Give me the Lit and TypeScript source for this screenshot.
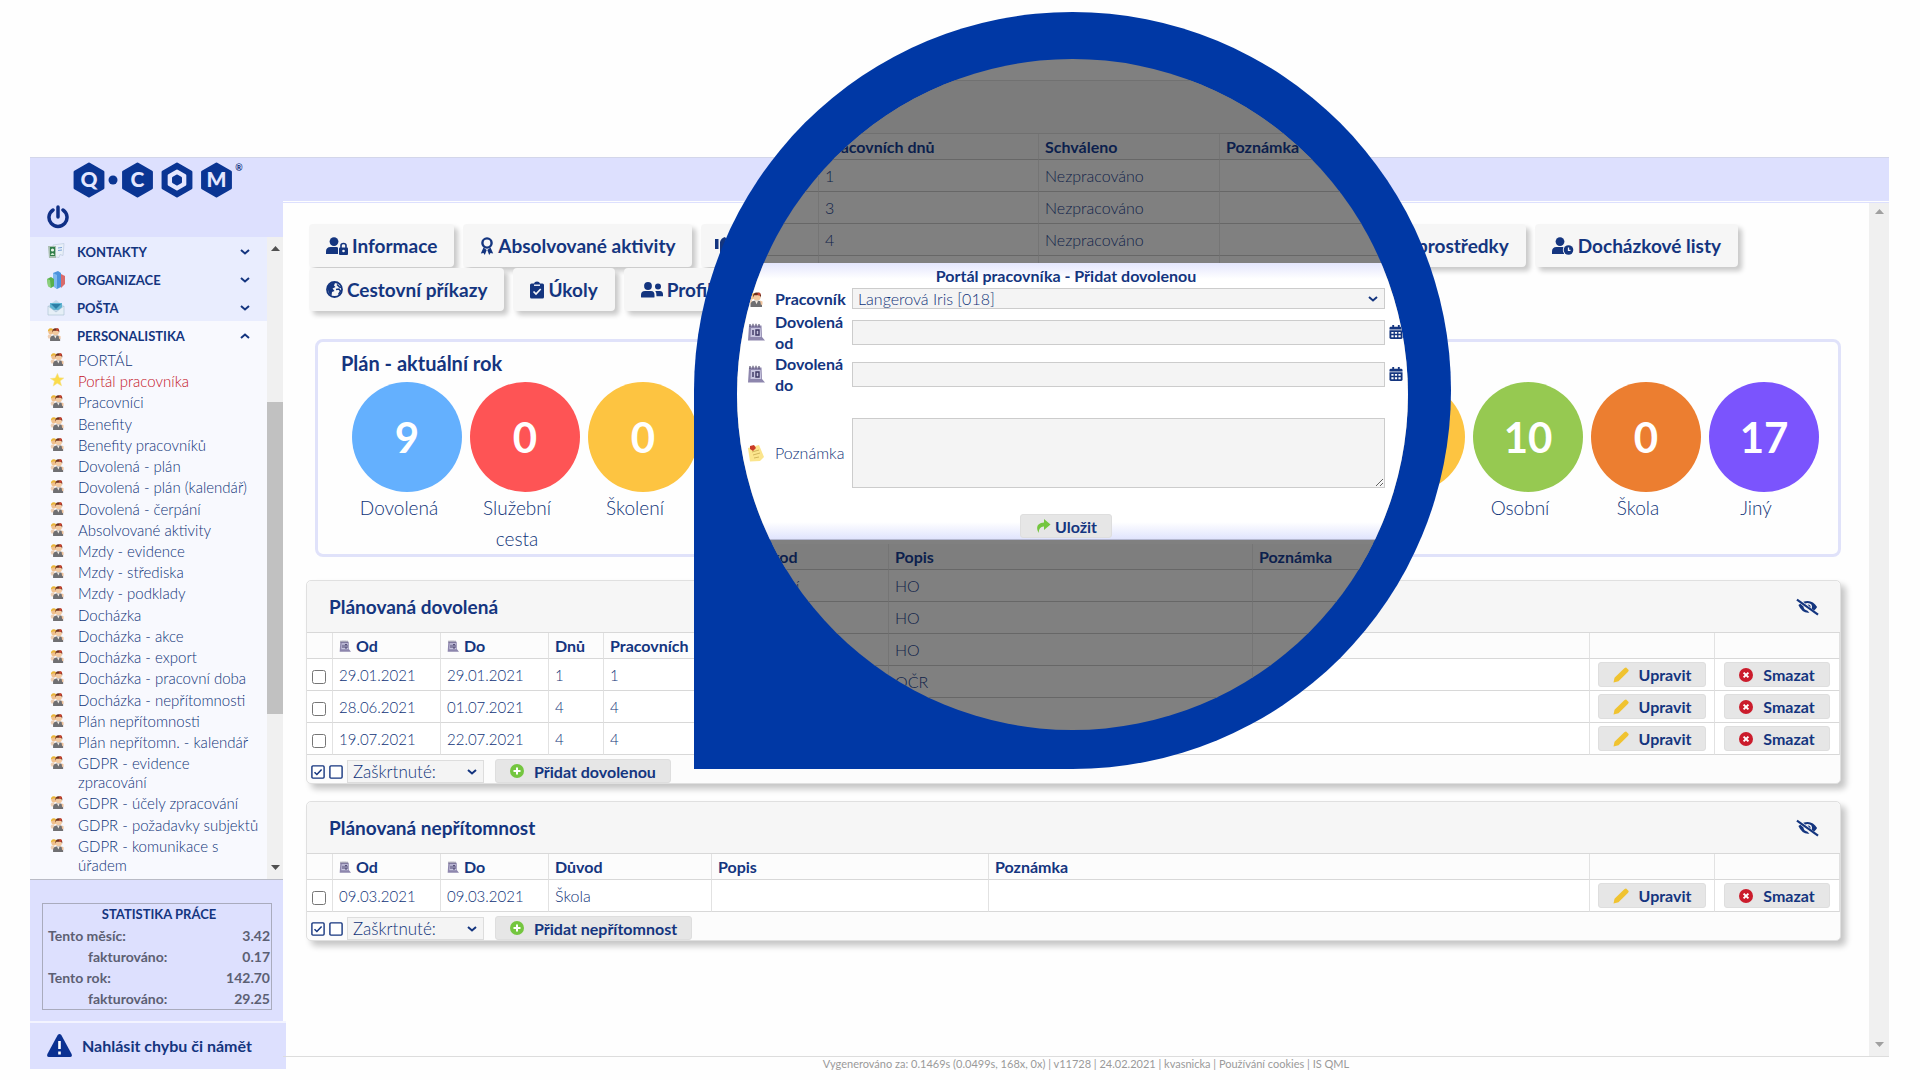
import { LitElement, html, svg, css } from "lit";
import { customElement } from "lit/decorators.js";
import { styleMap } from "lit/directives/style-map.js";

/* ---------- icons ---------- */
const person = html`<svg class="ico-person" viewBox="0 0 16 16" aria-hidden="true">
  <circle cx="4.5" cy="5.5" r="3" fill="#f0c08c"/><path d="M1 5.5Q1 1 4.6 1.4 7.5 1.6 7 4.5L5 3.6 2.4 4.4z" fill="#e9b53a"/>
  <path d="M0.8 11q0-3 3.6-2.8l2 4.800H1.600z" fill="#eecfb4"/>
  <circle cx="10" cy="6" r="3.600" fill="#f2c9a0"/><path d="M6.200 6.500Q5.500 1.500 9.800 1.400q5-.2 4.200 5-1-2.600-2.700-2.400-2.600.6-4.100.2z" fill="#6d2f1c"/>
  <circle cx="12" cy="3" r="1.500" fill="#c8442f"/>
  <path d="M3.500 16q-.6-6 3.700-6.200h4.800q3.600.4 3 6.200z" fill="#6f6f72"/><path d="M8 9.800h3l-1.400 3.400z" fill="#f4ece4"/>
  <path d="M13 9.500l2.500 1v3l-1.500.4z" fill="#f0c39c"/></svg>`;
const star = html`<svg class="ico-person" viewBox="0 0 16 16" aria-hidden="true"><path d="M8.500.5l2 5 5.300.200-4.200 3.400 1.600 5.600-4.900-3-4.600 3.200 1.400-5.700L.5 6.300l5.500-.5z" fill="#fbdc4b" stroke="#f3e08a" stroke-width=".6"/></svg>`;
const contact = html`<svg class="ico-group" viewBox="0 0 18 18" aria-hidden="true"><path d="M6 2l11-1.500-1 12-3-1-1 3-6-1z" fill="#e9f0f8" stroke="#b9c8dc" stroke-width=".6"/><path d="M1 3h8v12H2z" fill="#a9bfb0"/><path d="M3 4h5v9H3z" fill="#2f7d4a"/><circle cx="5.500" cy="7" r="1.600" fill="#e8f4e6"/><path d="M3.500 12q2-4 4 0z" fill="#d3ecd2"/><path d="M11 5l4-.5M11 7.500l4-.5" stroke="#7da4d8"/></svg>`;
const org = html`<svg class="ico-group" viewBox="0 0 18 18" aria-hidden="true"><path d="M6 2l5-2 3 2v14l-4 2-4-3z" fill="#4b93dd"/><path d="M6 2l4 2v14l-4-3z" fill="#7fb9f0"/><path d="M14 3l4 2v8l-4 4z" fill="#d96a6a"/><path d="M0 8l4-2 3 2v7l-3 2-3-2z" fill="#58b04c"/><path d="M0 8l3 1 1 8-3-2z" fill="#8cd07c"/></svg>`;
const mail = html`<svg class="ico-group" viewBox="0 0 18 18" aria-hidden="true"><path d="M1 7l8-6 8 6v9H1z" fill="#c6d9ea"/><path d="M3 4h12v7H3z" fill="#5fb4d2"/><path d="M4 5h10l-5 5z" fill="#2c7ea6"/><path d="M1 7l8 6 8-6v9H1z" fill="#e6eff7" stroke="#a9bfd2" stroke-width=".6"/></svg>`;
const cal = html`<svg class="ico-cal" viewBox="0 0 18 18" aria-hidden="true"><path d="M2 2.500h12.500l.5 11.500 3 3.500H1z" fill="#8d86ad"/><path d="M4 5h9.500l.8 9H3.500z" fill="#c8c5df"/><path d="M3 1v3M6 .8v3M9 .8v3M12 1v3" stroke="#5c5675" stroke-width="1.200"/><path d="M6 7v5M9 7h3v5H9z" stroke="#3c3663" stroke-width="1.400" fill="none"/></svg>`;
const note = html`<svg class="ico-cal" viewBox="0 0 18 18" aria-hidden="true"><path d="M1 4l11-3 5 12-4 4-10 .5z" fill="#fbe58d"/><path d="M5 8l7-2M6 11l7-2M7 14l5-1" stroke="#d2b65c"/><path d="M3 2l4-1 2 3-3 3-3-2z" fill="#c93a26"/></svg>`;
const chevron = html`<svg class="chev" viewBox="0 0 10 6" aria-hidden="true"><path d="M1 1l4 3.500L9 1" fill="none" stroke="currentColor" stroke-width="2"/></svg>`;
const plus = html`<svg class="ico14" viewBox="0 0 14 14" aria-hidden="true"><circle cx="7" cy="7" r="7" fill="#74c63f"/><path d="M7 3.500v7M3.500 7h7" stroke="#fff" stroke-width="2"/></svg>`;
const cross = html`<svg class="ico14" viewBox="0 0 14 14" aria-hidden="true"><circle cx="7" cy="7" r="7" fill="#cb1c2c"/><path d="M4.600 4.600l4.800 4.800M9.400 4.600L4.600 9.400" stroke="#fff" stroke-width="2"/></svg>`;
const pencil = html`<svg class="ico16" viewBox="0 0 16 16" aria-hidden="true"><path d="M.5 15.500l1-4.800L10.500 2q1.200-1.600 2.600-1.500l2.300 2.200q.8 1-.8 2.600L5.500 14.300z" fill="#f0c330"/></svg>`;
const saveArrow = html`<svg class="ico16" viewBox="0 0 16 16" aria-hidden="true"><path d="M9 1l6.500 5.500L9 12V8.500Q4 8.200 3.500 15-1 5.500 9 4.500z" fill="#74c63f"/></svg>`;
const eyeOff = html`<svg class="ico-eye" viewBox="0 0 24 18" aria-hidden="true"><path d="M2.500 7Q6.500 16 14 15l-2-2.200Q8 12 7.800 8.500L4.500 5.500z" fill="currentColor"/><path d="M7.500 3.500Q17 .5 22 9q-1 2-3 3.600l-2.500-1.900Q17.800 5 12 4.800q-1.200 0-2.300.5z" fill="currentColor"/><path d="M12 6.500q3.500-.3 3.200 3.200z" fill="currentColor"/><path d="M1 1.200L23 17" stroke="currentColor" stroke-width="2.200"/></svg>`;
const calSolid = html`<svg class="ico14" viewBox="0 0 14 15" aria-hidden="true"><path d="M0 3.500Q0 2 1.500 2H3V0h2v2h4V0h2v2h1.500Q14 2 14 3.500V4.800H0z" fill="currentColor"/><path d="M0 5.700h14V13.500Q14 15 12.500 15h-11Q0 15 0 13.500z" fill="currentColor"/><path d="M2 7.500h2.400v2H2zM5.800 7.500h2.400v2H5.800zM9.600 7.500H12v2H9.600zM2 11h2.400v2H2zM5.800 11h2.400v2H5.800zM9.600 11H12v2H9.600z" fill="#fff"/></svg>`;
const checkAll = html`<svg class="ico14" viewBox="0 0 14 14" aria-hidden="true"><rect x=".9" y=".9" width="12.200" height="12.200" rx="1" fill="#fff" stroke="currentColor" stroke-width="1.400"/><path d="M3.500 7.200l2.400 2.300 4.700-5" fill="none" stroke="currentColor" stroke-width="1.500"/></svg>`;
const checkNone = html`<svg class="ico14" viewBox="0 0 14 14" aria-hidden="true"><rect x=".9" y=".9" width="12.200" height="12.200" rx="1" fill="#fff" stroke="currentColor" stroke-width="1.400"/></svg>`;

const userBase = svg`<circle cx="8" cy="4.600" r="4.400"/><path d="M0 17v-2.500Q0 10 4.500 10h6Q12 10 12 11v6z"/>`;
const tabIcon: Record<string, unknown> = {
  lock: html`<svg class="ico-tab" viewBox="0 0 22 18" aria-hidden="true"><g fill="currentColor">${userBase}<rect x="13" y="10.500" width="9" height="7.500" rx="1"/></g><path d="M15 11V8.500Q15 6.500 17.500 6.500T20 8.500V11" fill="none" stroke="currentColor" stroke-width="1.600"/><circle cx="17.500" cy="14" r="1.300" fill="#f6f6f6"/></svg>`,
  clock: html`<svg class="ico-tab" viewBox="0 0 22 18" aria-hidden="true"><g fill="currentColor">${userBase}</g><circle cx="16.500" cy="13" r="5.700" fill="#f6f6f6"/><circle cx="16.500" cy="13" r="4.800" fill="currentColor"/><path d="M16.500 10.500V13.300H18.500" fill="none" stroke="#f6f6f6" stroke-width="1.300"/></svg>`,
  award: html`<svg class="ico-award" viewBox="0 0 14 18" aria-hidden="true"><circle cx="7" cy="6" r="4.600" fill="none" stroke="currentColor" stroke-width="2.400"/><path d="M3.500 10.500L.8 16.500l2.700-.4 1.300 1.900 1.900-5M10.500 10.500l2.700 6-2.700-.4L9.200 18l-1.900-5" fill="currentColor"/></svg>`,
  thumb: html`<svg class="ico-tab" viewBox="0 0 22 18" aria-hidden="true"><g fill="currentColor"><rect x="0" y="2" width="3.500" height="10"/><path d="M5 5Q6 1 10 0l1.500 2L10 5h8v9L9 17H5z"/></g></svg>`,
  globe: html`<svg class="ico-globe" viewBox="0 0 17 17" aria-hidden="true"><circle cx="8.500" cy="8.500" r="7.500" fill="none" stroke="currentColor" stroke-width="1.800"/><path d="M2 5Q5 1 9 2L8 4.500 9.500 6 6.500 7.500 8.500 10 6 11l-.5 4Q1 12 2 5z" fill="currentColor"/><path d="M11 3.500l2.500 2.500 2 .5M10 8.500l3-.5 1.500 2-2 3.500" fill="none" stroke="currentColor" stroke-width="1.500"/></svg>`,
  task: html`<svg class="ico-award" viewBox="0 0 14 17" aria-hidden="true"><path d="M1.500 2H4q.5-2 3-2t3 2h2.500Q14 2 14 3.500v12Q14 17 12.500 17h-11Q0 17 0 15.500v-12Q0 2 1.500 2z" fill="currentColor"/><path d="M4 3h6v1.500H4z" fill="#dfe4f4"/><path d="M3.500 10l2.500 2.500 4.700-5" fill="none" stroke="#f6f6f6" stroke-width="1.700"/></svg>`,
  users: html`<svg class="ico-tab" viewBox="0 0 22 16" aria-hidden="true"><g fill="currentColor"><circle cx="7" cy="4" r="3.900"/><path d="M0 15v-2q0-4 4-4h6q3.500 0 3.500 4v2q0 .5-1 .5H1q-1 0-1-.5z"/><circle cx="17" cy="4.500" r="3"/><path d="M14.300 9H19q3 .3 3 3.500v1.800h-6.500Q15.800 11 14.300 9z"/></g></svg>`,
};

const hex = (cx: number, cy: number, r: number, fill: string) => {
  const w = r * 0.87;
  const pts = [[0, -r], [w, -r / 2], [w, r / 2], [0, r], [-w, r / 2], [-w, -r / 2]]
    .map(([x, y]) => `${cx + x},${cy + y}`).join(" ");
  return svg`<polygon points=${pts} fill=${fill} stroke=${fill} stroke-width="3" stroke-linejoin="round"/>`;
};

const BLUE = "#0a3593";
const logo = html`<svg class="logo" viewBox="0 0 172 36" role="img" aria-label="Q·COM">
  ${[16, 64.500, 104, 143.500].map((x) => hex(x, 18, 16, BLUE))}
  <circle cx="40" cy="18" r="4.500" fill=${BLUE}/>
  ${hex(104, 18, 9, "#e4e7ff")}${hex(104, 18, 4, BLUE)}
  <g class="logo-letters"><text x="16" y="25">Q</text><text x="64.500" y="25">C</text><text x="143.500" y="25">M</text></g>
  <text class="logo-reg" x="166" y="9">®</text></svg>`;

/* ---------- data ---------- */
const groups = [
  { name: "KONTAKTY", icon: contact },
  { name: "ORGANIZACE", icon: org },
  { name: "POŠTA", icon: mail },
];
const menu = [
  "PORTÁL", "Portál pracovníka", "Pracovníci", "Benefity", "Benefity pracovníků", "Dovolená - plán",
  "Dovolená - plán (kalendář)", "Dovolená - čerpání", "Absolvované aktivity", "Mzdy - evidence",
  "Mzdy - střediska", "Mzdy - podklady", "Docházka", "Docházka - akce", "Docházka - export",
  "Docházka - pracovní doba", "Docházka - nepřítomnosti", "Plán nepřítomnosti", "Plán nepřítomn. - kalendář",
  "GDPR - evidence zpracování", "GDPR - účely zpracování", "GDPR - požadavky subjektů", "GDPR - komunikace s úřadem",
];
const stats = [
  ["Tento měsíc:", "3.42", false], ["fakturováno:", "0.17", true],
  ["Tento rok:", "142.70", false], ["fakturováno:", "29.25", true],
] as const;
const planLeft = [
  { n: 9, label: "Dovolená", color: "#64b0fe" },
  { n: 0, label: "Služební cesta", color: "#fe5455" },
  { n: 0, label: "Školení", color: "#fdc441" },
];
const planRight = [
  { n: "", label: "", color: "#fdc441" },
  { n: 10, label: "Osobní", color: "#96c951" },
  { n: 0, label: "Škola", color: "#ec7e30" },
  { n: 17, label: "Jiný", color: "#7b54fd" },
];

/* Element styles shared by the page and the magnified view. */
const shared = css`
  *, *::before, *::after { box-sizing: border-box; }
  :host { font-family: "Century Gothic", Lato, "Liberation Sans", sans-serif; font-weight: 300; color: #0f3378; font-size: 16px; }
  button, select, input, textarea { font: inherit; color: inherit; margin: 0; }
  svg { display: block; flex: none; }
  .ico14 { width: 14px; height: 14px; }
  .ico16 { width: 16px; height: 16px; }
  .ico-person { width: 14px; height: 14px; }
  .ico-group, .ico-cal { width: 18px; height: 18px; }
  .chev { width: 10px; height: 6px; color: #14357f; }
  .btn { display: inline-flex; align-items: center; justify-content: center; gap: 10px; height: 25px; padding: 0 14px;
    border: 1px solid #dedede; border-radius: 3px; background: #e6e6e6; color: #14357f; font-weight: 700; white-space: nowrap; }
  .pick { display: grid; align-items: center; }
  .pick > * { grid-area: 1 / 1; }
  .pick select { appearance: none; width: 100%; height: 100%; border: 1px solid #ccc; border-radius: 0; background: #f4f4f4; padding: 0 5px; }
  .pick .chev { justify-self: end; margin-right: 7px; pointer-events: none; }
  table { border-collapse: separate; border-spacing: 0; table-layout: fixed; width: 100%; }
  th, td { height: 32px; padding: 0 6px; text-align: left; white-space: nowrap; border-right: 1px solid #e2e2e2; border-bottom: 1px solid #d8d8d8; }
  th { height: 26px; font-weight: 700; color: #14357f; }
`;

@customElement("magnified-form")
export class MagnifiedForm extends LitElement {
  static styles = [shared, css`
    :host { display: block; width: 757px; height: 757px; padding: 47px 43px; background: #0038a5; border-radius: 50% 50% 50% 0; }
    .screen { display: flex; flex-direction: column; width: 671px; height: 671px; border-radius: 50%; overflow: hidden; background: #808080; }
    .top { height: 204px; overflow: hidden; }
    .strip { height: 22px; border-bottom: 1px solid #717171; }
    .band { height: 53px; background: #7c7c7c; border-bottom: 1px solid #707070; }
    th, td { border-right-color: #757575; border-bottom-color: #676767; color: #10234a; }
    th { background: #7e7e7e; color: #0c1f4d; }
    .c1 { width: 82px; } .c2 { width: 220px; } .c3 { width: 181px; }
    .d1 { width: 152px; } .d2 { width: 364px; }
    .low { padding-top: 4px; }
    .low th:first-child, .low td:first-child { padding-left: 13px; }
    form { display: flex; flex-direction: column; height: 277px; flex: none; border-bottom: 1px solid #b5b8d0;
      background: linear-gradient(#e4e6fd, #fff 16px, #fff 259px, #e0e4fd); }
    h2 { margin: 3px 0 0; padding-right: 13px; font-size: 16px; line-height: 20px; text-align: center; color: #14357f; }
    .field { display: grid; grid-template-columns: 28px 77px 533px 1fr; align-items: center; padding-left: 10px; height: 42px; }
    .field label { line-height: 21px; font-weight: 700; color: #14357f; }
    .field input { height: 25px; border: 1px solid #ccc; background: #f4f4f4; }
    .field .calendar { border: 0; padding: 0; background: none; color: #14357f; margin-left: 4px; justify-self: start; }
    .pick-row { height: 25px; }
    .pick { height: 21px; }
    .ico-person { width: 16px; height: 16px; }
    .req { color: #c23; font-size: 14px; line-height: 14px; align-self: start; padding-left: 5px; }
    .text-row { height: 115px; }
    .field.text-row label { font-weight: 300; color: #0f3378; }
    textarea { height: 70px; border: 1px solid #ccc; background: #f4f4f4; resize: vertical; }
    .save { align-self: center; margin: 4px 13px 0 0; height: 24px; gap: 4px; }
  `];

  render() {
    return html`<div class="screen">
      <div class="top"><div class="strip"></div><div class="band"></div>
        <table><colgroup><col class="c1"><col class="c2"><col class="c3"><col></colgroup>
          <tr><th></th><th>Pracovních dnů</th><th>Schváleno</th><th>Poznámka</th></tr>
          ${["1", "3", "4"].map((n) => html`<tr><td></td><td>${n}</td><td>Nezpracováno</td><td></td></tr>`)}
          <tr><td></td><td></td><td></td><td></td></tr>
        </table></div>
      <form @submit=${(e: Event) => e.preventDefault()}>
        <h2>Portál pracovníka - Přidat dovolenou</h2>
        <div class="field pick-row">${person}<label for="who">Pracovník</label>
          <span class="pick"><select id="who"><option>Langerová Iris [018]</option></select>${chevron}</span><span class="req">*</span></div>
        <div class="field">${cal}<label for="from">Dovolená od</label><input id="from">
          <button type="button" class="calendar" aria-label="Kalendář">${calSolid}</button></div>
        <div class="field">${cal}<label for="to">Dovolená do</label><input id="to">
          <button type="button" class="calendar" aria-label="Kalendář">${calSolid}</button></div>
        <div class="field text-row">${note}<label for="memo">Poznámka</label><textarea id="memo"></textarea></div>
        <button class="btn save">${saveArrow}Uložit</button>
      </form>
      <div class="low"><table><colgroup><col class="d1"><col class="d2"><col></colgroup>
        <tr><th>Důvod</th><th>Popis</th><th>Poznámka</th></tr>
        ${[["Osobní", "HO"], ["", "HO"], ["", "HO"], ["", "OČR"]].map(([a, b]) => html`<tr><td>${a}</td><td>${b}</td><td></td></tr>`)}
      </table></div>
    </div>`;
  }
}

@customElement("side-bar")
export class SideBar extends LitElement {
  static styles = [shared, css`
    :host { display: flex; flex-direction: column; background: #dde0fe; font-size: 14px; }
    .head { height: 80px; padding: 4px 0 0 43px; border-top: 1px solid #d3d6ea; }
    .logo { width: 172px; height: 36px; }
    .logo-letters { fill: #e4e7ff; font: 900 21px Lato, sans-serif; text-anchor: middle; }
    .logo-reg { fill: #14357f; font: 700 9px Lato, sans-serif; text-anchor: middle; }
    .power { border: 0; background: none; padding: 0; margin: 7px 0 0 -26px; color: #0f2f86; display: block; }
    .power svg { width: 22px; height: 24px; }
    .scroller { flex: 1; display: flex; border-bottom: 1px solid #b9bbc6; }
    nav { flex: 1; display: flex; flex-direction: column; background: #f8f9fe; }
    .group { display: flex; align-items: center; height: 28px; padding: 2px 17px 0 17px; gap: 12px; border: 0; background: #e9edfe;
      color: #14357f; font-weight: 700; font-size: 13px; text-align: left; }
    .group span { flex: 1; }
    .group.open { background: #f8f9fe; }
    .group.open .chev { transform: rotate(180deg); }
    ul { list-style: none; margin: 0; padding: 2px 0 4px; flex: 1; display: flex; flex-direction: column; justify-content: space-between; }
    li a { display: grid; grid-template-columns: 14px minmax(0, 1fr); gap: 14px; padding: 0 7px 0 20px; line-height: 19px; color: inherit; text-decoration: none; font-size: 15px; }
    li .ico-person { margin-top: 1px; }
    li a.active { color: #c4131f; }
    .bar { width: 16px; background: #f0f0f0; display: flex; flex-direction: column; align-items: center; justify-content: space-between; padding: 9px 0; }
    .bar i { width: 16px; height: 50%; background: #c1c1c1; }
    .bar svg { width: 9px; height: 5px; }
    .stats { padding: 23px 11px 11px 12px; }
    .stats table { border: 1px solid #a9abbd; }
    .stats th, .stats td { border: 0; height: 21px; line-height: 21px; padding: 0 1px 0 5px; }
    .stats th { text-align: center; font-size: 13px; }
    .stats td { font-weight: 700; color: #5c5f73; }
    .stats td.sub { padding-left: 45px; }
    .stats td:last-child { text-align: right; }
    .label-col { width: 160px; }
    .report { display: flex; align-items: center; gap: 10px; height: 48px; padding: 0 0 2px 17px; margin-right: -3px; background: #dde0fe;
      border-top: 2px solid #f3f4ff; color: #14357f; font-weight: 700; font-size: 16px; text-decoration: none; }
    .report svg { width: 25px; height: 23px; }
  `];

  render() {
    return html`
      <div class="head">${logo}
        <button class="power" aria-label="Odhlásit"><svg viewBox="0 0 22 24"><path d="M6 5a9 9 0 1 0 10 0" fill="none" stroke="currentColor" stroke-width="3.500" stroke-linecap="round"/><path d="M11 2v10" stroke="currentColor" stroke-width="3.500" stroke-linecap="round"/></svg></button>
      </div>
      <div class="scroller">
        <nav>
          ${groups.map((g) => html`<button class="group">${g.icon}<span>${g.name}</span>${chevron}</button>`)}
          <button class="group open">${html`<svg class="ico-group" viewBox="0 0 18 18">${person}</svg>`}<span>PERSONALISTIKA</span>${chevron}</button>
          <ul>${menu.map((m, i) => html`<li><a href="#" class=${i === 1 ? "active" : ""}>${i === 1 ? star : person}<span>${m}</span></a></li>`)}</ul>
        </nav>
        <div class="bar"><svg viewBox="0 0 9 5"><path d="M0 5L4.500 0 9 5z" fill="#505050"/></svg><i></i><svg viewBox="0 0 9 5"><path d="M0 0l4.500 5L9 0z" fill="#505050"/></svg></div>
      </div>
      <div class="stats"><table><colgroup><col class="label-col"><col></colgroup>
        <tr><th colspan="2">STATISTIKA PRÁCE</th></tr>
        ${stats.map(([a, b, sub]) => html`<tr><td class=${sub ? "sub" : ""}>${a}</td><td>${b}</td></tr>`)}
      </table></div>
      <a class="report" href="#"><svg viewBox="0 0 25 23"><path d="M10.700 1q1.800-2 3.600 0L24.600 20q.9 3-1.600 3H2q-2.500 0-1.600-3z" fill="#0b3192"/><path d="M12.500 7v8M12.500 17.500v3" stroke="#fff" stroke-width="2.600"/></svg>Nahlásit chybu či námět</a>`;
  }
}

@customElement("app-root")
export class AppRoot extends LitElement {
  static styles = [shared, css`
    :host { display: block; background: #fefefe; }
    .page { position: relative; min-height: 100vh; display: grid; grid-template-columns: 253px minmax(0, 1fr); padding: 157px 31px 11px 30px; overflow: hidden; }
    main { display: flex; flex-direction: column; min-width: 0; }
    .banner { height: 46px; background: #dde0fe; border-top: 1px solid #d3d6ea; border-bottom: 3px double #dde0fe; background-clip: padding-box; }
    .body { flex: 1; display: flex; }
    .content { flex: 1; min-width: 0; padding: 21px 28px 0 23px; }
    .rail { width: 20px; background: #f0f0f0; display: flex; flex-direction: column; align-items: center; justify-content: space-between; padding: 6px 0 9px; }
    .rail svg { width: 9px; height: 5px; }
    footer { display: flex; justify-content: center; height: 13px; border-top: 1px solid #ddd; font-size: 11px; font-weight: 400; line-height: 14px; color: #9a9a9a; white-space: nowrap; }
    .tabs { display: flex; gap: 9px; margin-left: 3px; margin-bottom: 1px; }
    .tab { display: flex; align-items: center; gap: 4px; height: 43px; padding: 0 17px; border: 0; border-radius: 4px; background: #f6f6f6;
      box-shadow: 4px 4px 5px #c9c9c9; color: #14357f; font-weight: 700; font-size: 19px; white-space: nowrap; }
    .tab.wide { flex: 0 1 700px; padding: 0 14px; }
    .tab.profile { width: 200px; }
    .tab.push { margin-left: auto; }
    .tab.last { margin-right: 103px; }
    .ico-tab { width: 22px; height: 18px; }
    .ico-award { width: 14px; height: 18px; }
    .ico-globe { width: 17px; height: 17px; }
    .plan { margin: 28px 0 0 9px; height: 218px; border: 3px solid #e0e2fa; border-radius: 8px; padding: 9px 23px 0 23px; }
    h2 { margin: 0; font-size: 19px; line-height: 24px; color: #14357f; }
    .plan h2 { font-size: 20px; }
    .rings { display: flex; justify-content: space-between; margin: 7px 0 0 -1px; }
    .set { display: flex; }
    .kind { width: 118px; display: flex; flex-direction: column; text-align: center; font-size: 19px; line-height: 31px; }
    .ring { width: 110px; height: 110px; border-radius: 50%; margin-left: 12px; color: #fff; font-size: 42px; font-weight: 700; line-height: 110px; flex: none; }
    .kind .name { padding: 0 14px; }
    .panel { margin-top: 23px; border: 1px solid #e0e0e0; border-radius: 5px; box-shadow: 5px 5px 6px #c6c6c6; background: #fcfcfc; }
    .panel + .panel { margin-top: 17px; }
    .bar { display: flex; align-items: center; justify-content: space-between; height: 52px; padding: 0 21px 0 22px; background: #f6f6f6; border-bottom: 1px solid #d8d8d8; border-radius: 5px 5px 0 0; }
    .bar button { border: 0; padding: 0; background: none; color: #14357f; }
    .ico-eye { width: 23px; height: 18px; }
    td { background: #fff; }
    th .with { display: flex; align-items: center; gap: 5px; }
    th .ico-cal { width: 12px; height: 12px; }
    td.num { font-size: 15px; }
    td.act { text-align: center; padding: 0; }
    .act .btn { display: inline-flex; padding: 0 14px; vertical-align: middle; }
    td input { display: block; width: 14px; height: 14px; margin: 4px 0 0 -1px; }
    .sel { width: 26px; } .date { width: 108px; } .days { width: 55px; } .why { width: 163px; } .what { width: 277px; } .a { width: 125px; }
    .foot { display: flex; align-items: flex-end; gap: 4px; height: 28px; padding-left: 4px; }
    .foot .tick { border: 0; padding: 0; background: none; color: #14357f; height: 22px; }
    .foot .pick { width: 137px; height: 23px; font-size: 17px; margin-right: 7px; }
    .foot .pick select { border-color: #ddd; }
    .foot .btn { height: 24px; }
    magnified-form { position: absolute; left: 694px; top: 12px; }
  `];

  private tab(icon: string, label: string, cls = "") {
    return html`<button class="tab ${cls}">${icon ? tabIcon[icon] : ""}${label}</button>`;
  }

  private kind(k: { n: number | string; label: string; color: string }) {
    return html`<div class="kind"><span class="ring" style=${styleMap({ background: k.color })}>${k.n}</span><span class="name">${k.label}</span></div>`;
  }

  private actions() {
    return html`<td class="act"><button class="btn">${pencil}Upravit</button></td><td class="act"><button class="btn">${cross}Smazat</button></td>`;
  }

  private foot(label: string) {
    return html`<div class="foot"><button class="tick" aria-label="Zaškrtnout vše">${checkAll}</button><button class="tick" aria-label="Zrušit výběr">${checkNone}</button>
      <span class="pick"><select aria-label="Zaškrtnuté"><option>Zaškrtnuté:</option></select>${chevron}</span>
      <button class="btn">${plus}${label}</button></div>`;
  }

  private heading(title: string) {
    return html`<div class="bar"><h2>${title}</h2><button aria-label="Skrýt">${eyeOff}</button></div>`;
  }

  private pick(id: string) {
    return html`<td><input type="checkbox" aria-label="Vybrat ${id}"></td>`;
  }

  render() {
    const dateHead = html`<th></th><th><span class="with">${cal}Od</span></th><th><span class="with">${cal}Do</span></th>`;
    return html`<div class="page">
      <side-bar></side-bar>
      <main>
        <div class="banner"></div>
        <div class="body">
          <div class="content">
            <div class="tabs">${this.tab("lock", "Informace")}${this.tab("award", "Absolvované aktivity")}${this.tab("thumb", "", "wide")}
              ${this.tab("", "prostředky", "push")}${this.tab("clock", "Docházkové listy", "last")}</div>
            <div class="tabs">${this.tab("globe", "Cestovní příkazy")}${this.tab("task", "Úkoly")}${this.tab("users", "Profil", "profile")}</div>
            <section class="plan"><h2>Plán - aktuální rok</h2>
              <div class="rings"><div class="set">${planLeft.map((k) => this.kind(k))}</div><div class="set">${planRight.map((k) => this.kind(k))}</div></div>
            </section>
            <section class="panel">${this.heading("Plánovaná dovolená")}
              <table><colgroup><col class="sel"><col class="date"><col class="date"><col class="days"><col><col class="a"><col class="a"></colgroup>
                <tr>${dateHead}<th>Dnů</th><th>Pracovních</th><th></th><th></th></tr>
                ${[["29.01.2021", "29.01.2021", "1"], ["28.06.2021", "01.07.2021", "4"], ["19.07.2021", "22.07.2021", "4"]].map(([a, b, n]) =>
                  html`<tr>${this.pick(a)}<td class="num">${a}</td><td class="num">${b}</td><td class="num">${n}</td><td class="num">${n}</td>${this.actions()}</tr>`)}
              </table>${this.foot("Přidat dovolenou")}</section>
            <section class="panel">${this.heading("Plánovaná nepřítomnost")}
              <table><colgroup><col class="sel"><col class="date"><col class="date"><col class="why"><col class="what"><col><col class="a"><col class="a"></colgroup>
                <tr>${dateHead}<th>Důvod</th><th>Popis</th><th>Poznámka</th><th></th><th></th></tr>
                <tr>${this.pick("09.03.2021")}<td class="num">09.03.2021</td><td class="num">09.03.2021</td><td>Škola</td><td></td><td></td>${this.actions()}</tr>
              </table>${this.foot("Přidat nepřítomnost")}</section>
          </div>
          <div class="rail"><svg viewBox="0 0 9 5"><path d="M0 5L4.500 0 9 5z" fill="#a0a0a0"/></svg><svg viewBox="0 0 9 5"><path d="M0 0l4.500 5L9 0z" fill="#a0a0a0"/></svg></div>
        </div>
        <footer>Vygenerováno za: 0.1469s (0.0499s, 168x, 0x) | v11728 | 24.02.2021 | kvasnicka | Používání cookies | IS QML</footer>
      </main>
      <magnified-form></magnified-form>
    </div>`;
  }
}
